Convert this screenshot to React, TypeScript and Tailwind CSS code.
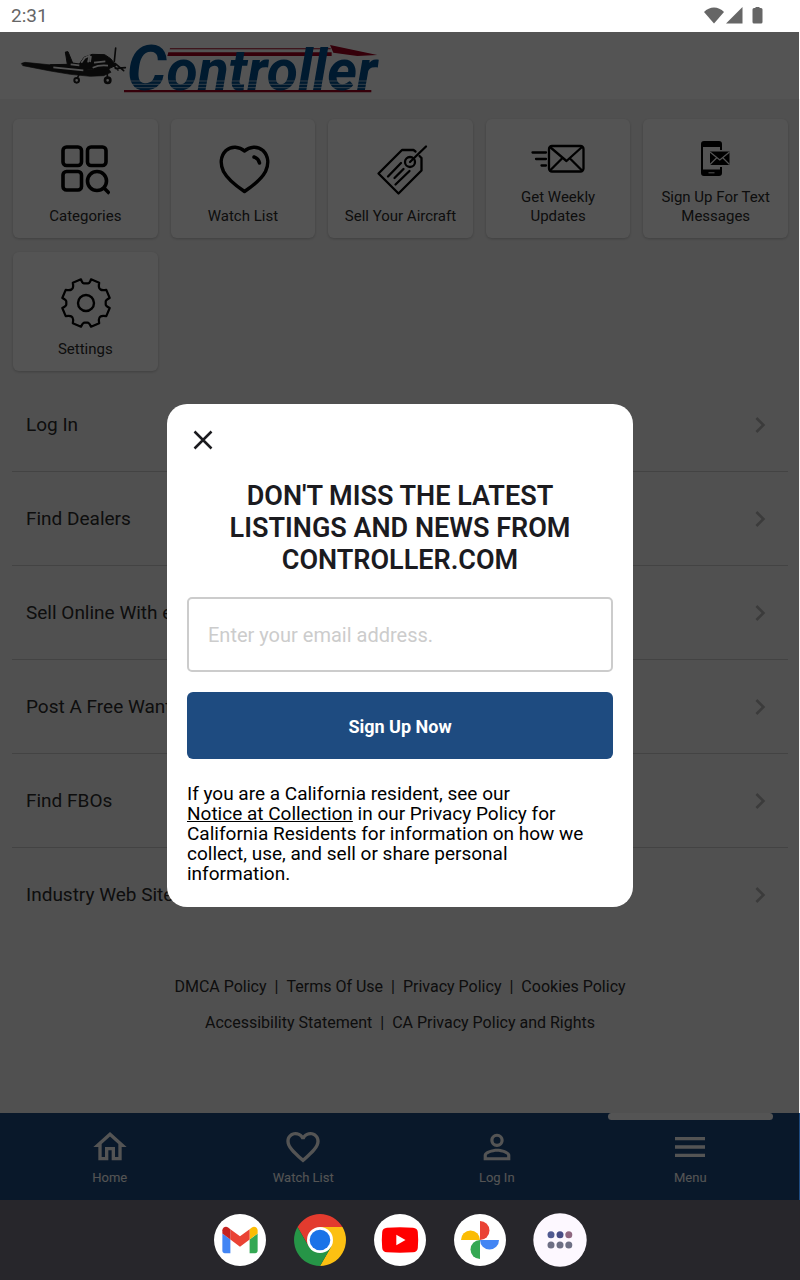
import { useState } from 'react';
import type { ReactNode } from 'react';
import { MdChevronRight, MdFavoriteBorder, MdMenu, MdOutlineHome, MdPersonOutline } from 'react-icons/md';

const menuLinks = [
  'Log In',
  'Find Dealers',
  'Sell Online With eBay',
  'Post A Free Wanted Ad',
  'Find FBOs',
  'Industry Web Sites'
];

const footerLinks = [
  ['DMCA Policy', 'Terms Of Use', 'Privacy Policy', 'Cookies Policy'],
  ['Accessibility Statement', 'CA Privacy Policy and Rights']
];

function StatusBar() {
  return (
    <div className="flex h-8 items-center justify-between bg-white pl-[11px] pr-[37px] text-[#666666]">
      <span className="text-[19px] leading-8">2:31</span>
      <svg width="60" height="18" viewBox="0 0 60 18" fill="#666666" aria-hidden="true">
        <path d="M1 5C6.500-1 15.500-1 21 5L11 16.500z" />
        <path d="M39.500 0v16.500H23z" />
        <path d="M52.500 -.5h4v1.500h1.500q1.500 0 1.500 1.500v12.500q0 1.500-1.500 1.500h-7q-1.500 0-1.500-1.500v-12.500q0-1.500 1.500-1.500h1.500z" />
      </svg>
    </div>
  );
}

function Logo() {
  return (
    <svg width="360" height="56" viewBox="60 120 1080 168" className="overflow-visible" role="img" aria-label="Controller">
      {/* Plane */}
      <g fill="#1c1c1c" stroke="#1c1c1c" strokeLinejoin="round" strokeLinecap="round">
        <path d="M65 190l10-3 80 8 80 8 40 6 50-4 8 12-22 10-40 2-60-6-60-10-82-16z" strokeWidth="2" />
        <path d="M152 194l50-1-6-37 8-1 14 34 20 3 14-20 24-9 38 1 18 12 16 20-30 14-70-4-96-10z" strokeWidth="3" />
        <path d="M347 144l-4 40M345 190l26 22M376 203l-30 2M322 222v12M238 222l-6 12M330 186l24 24" fill="none" strokeWidth="5" />
        <circle cx="230" cy="241" r="7" fill="none" strokeWidth="6" />
        <circle cx="323" cy="241" r="8" fill="none" strokeWidth="8" />
      </g>
      <g fill="none" stroke="#ffffff" strokeWidth="5">
        <path d="M244 188l10-14 14-7-4 20M273 168l-3 18M282 188l34-4M160 202l90 9M278 203q20-9 46-6M212 193l26 3" />
      </g>
      {/* Speed lines */}
      <g fill="#a0001f">
        <path d="M510 145h482v3H509z" />
        <path d="M505 157h490v11H502z" />
        <path d="M990 135l142 30-60 3-72-10z" />
        <path d="M372 270h742v7H372z" />
      </g>
      <text x="380" y="271" fontSize="171" fontWeight="700" fontStyle="italic" fill="#00508f">
        <tspan fontSize="188">C</tspan>ontroller
      </text>
      <path d="M380 243h750M380 253h750M380 263h750" stroke="#ffffff" strokeWidth="3" strokeOpacity="0.6" />
    </svg>
  );
}

function CategoriesIcon() {
  return (
    <svg width="50" height="50" viewBox="-1 0 50 50" fill="none" stroke="#000000" strokeWidth="3.600" aria-hidden="true">
      <rect x="2" y="2" width="18.500" height="18.500" rx="3.500" />
      <rect x="26.500" y="2" width="18.500" height="18.500" rx="3.500" />
      <rect x="2" y="26.500" width="18.500" height="18.500" rx="3.500" />
      <circle cx="36" cy="36" r="9.500" />
      <path d="M42.500 42.500l6 6" />
    </svg>
  );
}

function HeartIcon() {
  return (
    <svg width="50" height="50" viewBox="-1.5 0 50 50" fill="none" stroke="#000000" strokeWidth="3.500" className="overflow-visible" aria-hidden="true">
      <path d="M25 6C20 1.500 12 .5 6.500 5.500 1 11 .5 19 4 26.500 8.500 35 16 40.500 25 46.500 34 40.500 41.500 35 46 26.500 49.500 19 49 11 43.500 5.500 38 .5 30 1.500 25 6z" strokeLinejoin="round" />
      <path d="M34.500 12q4.500 1.500 5.500 6" strokeLinecap="round" />
    </svg>
  );
}

function TagIcon() {
  return (
    <svg width="50" height="50" viewBox="-2 0 50 50" fill="none" stroke="#000000" strokeWidth="2.300" strokeLinecap="round" strokeLinejoin="round" className="overflow-visible" aria-hidden="true">
      <path d="M38.500 6.500L36.500 5H25L1.500 28.500l20 20 23-23V13l-2-2" />
      <circle cx="33" cy="17" r="5" />
      <path d="M33 17L49 1.500M11 31.500l13-13.500M17.500 33l9-9M18.500 39.500l14-13.500" />
    </svg>
  );
}

function MailIcon() {
  return (
    <svg width="54" height="35" viewBox="0 0 54 35" fill="none" stroke="#000000" strokeWidth="2.300" strokeLinecap="round" strokeLinejoin="round" aria-hidden="true">
      <rect x="18" y="5" width="34.500" height="25.500" rx="3" />
      <path d="M19 6l16.500 14L51 6M19 29.500l12-12M51 29.500l-12-12M1.500 11.500H15M5 18h10M10.500 24.500H15" />
    </svg>
  );
}

function PhoneMailIcon() {
  return (
    <svg width="35" height="35" viewBox="0 0 35 35" aria-hidden="true">
      <path d="M6 0h15q3 0 3 3v6h-2V6H5v22.500H22V26h2v6q0 3-3 3H6q-3 0-3-3V3q0-3 3-3z" fill="#000000" />
      <path d="M10.500 31.800h6" stroke="#ffffff" strokeWidth="1" />
      <path d="M12 10.500h19.500v13.500H12z" fill="#000000" />
      <path d="M12 11l9.800 8 9.700-8M12 23.500l6.500-6.500M31.500 23.500l-6.500-6.500" fill="none" stroke="#ffffff" strokeWidth="1.200" />
    </svg>
  );
}

function GearIcon() {
  return (
    <svg width="50" height="50" viewBox="-1 0 50 50" fill="none" stroke="#000000" strokeWidth="2.200" strokeLinejoin="round" className="overflow-visible" aria-hidden="true">
      <path d="M20 1.300Q21.200 5 22.500 5.300H27.500Q28.800 5 30 1.300L38.200 4.700C37.500 8 37.500 9.200 38.500 10.500L39.500 11.500C41 12.500 42 12.500 45.300 11.800L48.700 20C45.500 21.500 44.700 22 44.700 23.500V26.500C44.700 28 45.500 28.500 48.700 30L45.300 38.200C42 37.500 41 37.500 39.500 38.500L38.500 39.500C37.500 41 37.500 42 38.200 45.300L30 48.700C28.500 45.500 28 44.700 26.500 44.700H23.500C22 44.700 21.500 45.500 20 48.700L11.800 45.300C12.500 42 12.500 41 11.500 39.500L10.500 38.500C9 37.500 8 37.500 4.700 38.200L1.300 30C4.500 28.500 5.300 28 5.300 26.500V23.500C5.300 22 4.500 21.500 1.300 20L4.700 11.800C8 12.500 9 12.500 10.500 11.500L11.500 10.500C12.500 9.200 12.500 8 11.800 4.700z" />
      <circle cx="25" cy="25" r="8" strokeWidth="2.400" />
    </svg>
  );
}

const tiles: { label: string; icon: ReactNode }[] = [
  { label: 'Categories', icon: <CategoriesIcon /> },
  { label: 'Watch List', icon: <HeartIcon /> },
  { label: 'Sell Your Aircraft', icon: <TagIcon /> },
  { label: 'Get Weekly Updates', icon: <MailIcon /> },
  { label: 'Sign Up For Text Messages', icon: <PhoneMailIcon /> },
  { label: 'Settings', icon: <GearIcon /> }
];

const tabs = [
  { label: 'Home', icon: <MdOutlineHome size={40} /> },
  { label: 'Watch List', icon: <MdFavoriteBorder size={40} /> },
  { label: 'Log In', icon: <MdPersonOutline size={40} /> },
  { label: 'Menu', icon: <MdMenu size={40} /> }
];

function BottomNav() {
  return (
    <nav className="grid grid-cols-4 bg-[#1e4b80] px-[13px] text-white">
      {tabs.map((tab) => (
        <a key={tab.label} href="#" className="relative flex flex-col items-center pb-3 pt-[14px]">
          {tab.label === 'Menu' && (
            <span className="absolute inset-x-[14px] top-0 h-[7px] rounded-full bg-white" />
          )}
          {tab.icon}
          <span className="text-[13px] leading-[21px]">{tab.label}</span>
        </a>
      ))}
    </nav>
  );
}

function Dock() {
  return (
    <div className="flex h-20 items-center justify-center gap-[26px] bg-[#27262b]">
      <button aria-label="Gmail">
        <svg width="54" height="54" viewBox="0 0 54 54">
          <circle cx="27" cy="27" r="26" fill="#ffffff" />
          <g transform="translate(-11.5 -3.1) scale(.401)">
            <path fill="#4285f4" d="M58 108h14V74L52 59v43c0 3.320 2.690 6 6 6" />
            <path fill="#34a853" d="M120 108h14c3.320 0 6-2.690 6-6V59l-20 15" />
            <path fill="#fbbc04" d="M120 48v26l20-15v-8c0-7.420-8.470-11.650-14.400-7.200" />
            <path fill="#ea4335" d="M72 74V48l24 18 24-18v26L96 92" />
            <path fill="#c5221f" d="M52 51v8l20 15V48l-5.600-4.200c-5.940-4.450-14.400-.22-14.400 7.200" />
          </g>
        </svg>
      </button>
      <button aria-label="Chrome">
        <svg width="54" height="54" viewBox="0 0 54 54">
          <path fill="#e33b2e" d="M49.500 14H27L15.740 33.500 4.500 14A26 26 0 0 1 49.500 14z" />
          <path fill="#fcc012" d="M49.500 14A26 26 0 0 1 27 53L38.260 33.500 27 14z" />
          <path fill="#269547" d="M27 53A26 26 0 0 1 4.500 14L15.740 33.500H38.260z" />
          <circle cx="27" cy="27" r="13" fill="#ffffff" />
          <circle cx="27" cy="27" r="10.300" fill="#1a73e8" />
        </svg>
      </button>
      <button aria-label="YouTube">
        <svg width="54" height="54" viewBox="0 0 54 54">
          <circle cx="27" cy="27" r="26" fill="#ffffff" />
          <path fill="#ff0000" d="M14 14.700Q27 13.900 40 14.700 44.400 15 44.800 19 45.600 27 44.800 35 44.400 39 40 39.300 27 40.100 14 39.300 9.600 39 9.200 35 8.400 27 9.200 19 9.600 15 14 14.700z" />
          <path fill="#ffffff" d="M23.300 21.700L32.500 27l-9.200 5.300z" />
        </svg>
      </button>
      <button aria-label="Photos">
        <svg width="54" height="54" viewBox="0 0 54 54">
          <circle cx="27" cy="27" r="26" fill="#ffffff" />
          <path fill="#ea4335" d="M27 8a9.500 9.500 0 0 1 0 19z" />
          <path fill="#fbbc04" d="M8 27a9.500 9.500 0 0 1 19 0z" />
          <path fill="#4285f4" d="M46 27a9.500 9.500 0 0 1-19 0z" />
          <path fill="#34a853" d="M27 46a9.500 9.500 0 0 1 0-19z" />
        </svg>
      </button>
      <button aria-label="All apps">
        <svg width="54" height="54" viewBox="0 0 54 54">
          <circle cx="27" cy="27" r="26.700" fill="#fdf8ff" />
          <circle cx="18" cy="21.700" r="3.500" fill="#505a91" />
          <circle cx="27" cy="21.700" r="3.500" fill="#474d86" />
          <circle cx="35.800" cy="21.700" r="3.500" fill="#8f6780" />
          <circle cx="18" cy="32" r="3.500" fill="#6d6f84" />
          <circle cx="27" cy="32" r="3.500" fill="#6d6f84" />
          <circle cx="35.800" cy="32" r="3.500" fill="#6d6f84" />
        </svg>
      </button>
    </div>
  );
}

function SignUpDialog({ onClose }: { onClose: () => void }) {
  const [email, setEmail] = useState('');

  return (
    <div className="absolute inset-0 flex items-center justify-center pb-0.5">
      <div
        role="dialog"
        aria-modal="true"
        aria-labelledby="signup-title"
        className="w-[466px] max-w-full rounded-[20px] bg-white px-5 pb-[23px] pt-[18px]"
      >
        <button aria-label="Close" onClick={onClose} className="-ml-0.5 block">
          <svg width="36" height="36" viewBox="0 0 36 36" fill="none" stroke="#1b1b1f" strokeWidth="2.500">
            <path d="M9.500 9.500l17 17M26.500 9.500l-17 17" />
          </svg>
        </button>
        <h2 id="signup-title" className="mt-[22px] text-center text-[27px] font-semibold leading-8 text-[#1b1b1f]">
          DON'T MISS THE LATEST LISTINGS AND NEWS FROM CONTROLLER.COM
        </h2>
        <form onSubmit={(e) => e.preventDefault()}>
          <input
            type="email"
            aria-label="Email address"
            value={email}
            onChange={(e) => setEmail(e.target.value)}
            placeholder="Enter your email address."
            className="mt-[21px] block h-[75px] w-full rounded-[5px] border-2 border-[#cccccc] px-[19px] pt-0.5 text-xl text-black outline-none placeholder:text-[#cccccc]"
          />
          <button
            type="submit"
            className="mt-5 block h-[67px] w-full rounded-[6px] bg-[#1e4b80] pt-0.5 text-[18px] font-bold text-white"
          >
            Sign Up Now
          </button>
        </form>
        <p className="mt-[25px] text-[19px] leading-5 text-black">
          If you are a California resident, see our{' '}
          <a href="#" className="whitespace-nowrap underline decoration-1">Notice at Collection</a> in our
          Privacy Policy for California Residents for information on how we collect, use, and sell or
          share personal information.
        </p>
      </div>
    </div>
  );
}

export default function App() {
  const [showDialog, setShowDialog] = useState(true);

  return (
    <div className="flex min-h-screen flex-col font-[Roboto,sans-serif]">
      <StatusBar />

      <div className="relative flex flex-1 flex-col">
        <div className="relative flex flex-1 flex-col bg-[#f2f2f2] text-[#2c2c2c]">
          <header className="bg-white px-5 pb-[3px] pt-2">
            <Logo />
          </header>

          <main className="flex-1 pt-5">
            {/* Shortcut tiles */}
            <div className="grid grid-cols-5 gap-x-[13px] gap-y-[14px] pl-[13px] pr-3">
              {tiles.map((tile) => (
                <button
                  key={tile.label}
                  className="flex h-[119px] flex-col items-center justify-end gap-3 rounded-[6px] bg-white px-4 pb-3 shadow-[0_1px_3px_rgba(0,0,0,0.2)]"
                >
                  {tile.icon}
                  <span className="text-[15px] leading-[19px]">{tile.label}</span>
                </button>
              ))}
            </div>

            <ul className="mt-[7px] divide-y divide-[#cccccc] px-3">
              {menuLinks.map((link) => (
                <li key={link}>
                  <a href="#" className="flex h-[93px] items-center justify-between pl-[14px] pr-3 text-[19px]">
                    <span className="pt-0.5">{link}</span>
                    <MdChevronRight size={32} className="text-[#b3b3b3]" />
                  </a>
                </li>
              ))}
            </ul>

            <footer className="mt-7 text-center text-base leading-9">
              {footerLinks.map((line) => (
                <div key={line[0]} className="flex justify-center">
                  {line.map((link, i) => (
                    <span key={link}>
                      {i > 0 && <span className="px-2">|</span>}
                      <a href="#">{link}</a>
                    </span>
                  ))}
                </div>
              ))}
            </footer>
          </main>

          <BottomNav />
          {showDialog && <div className="absolute inset-y-0 left-0 right-px bg-black/67" />}
        </div>

        <Dock />
        {showDialog && <SignUpDialog onClose={() => setShowDialog(false)} />}
      </div>
    </div>
  );
}
